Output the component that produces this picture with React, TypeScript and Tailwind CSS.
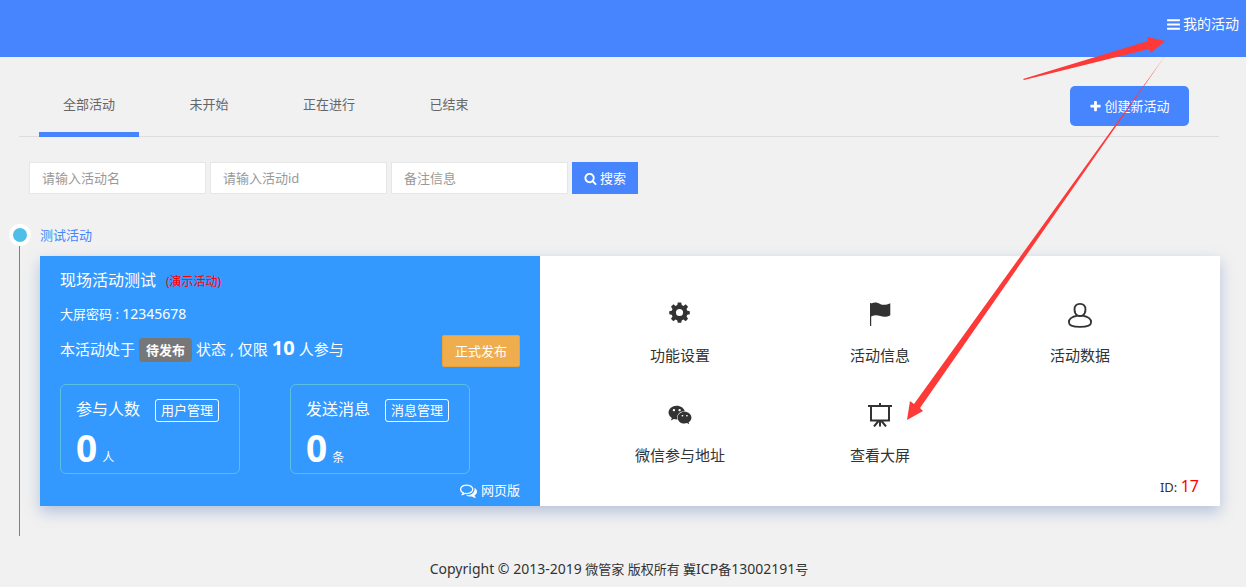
import type { FC, ReactNode } from "react";
import { FaWeixin } from "react-icons/fa";

type GlyphProps = { d: string; className?: string };

const Glyph: FC<GlyphProps> = ({ d, className }) => (
  <svg viewBox="0 0 1792 1792" fill="currentColor" aria-hidden="true" className={className}>
    <path d={d} />
  </svg>
);

const bars =
  "M1664 1344v128q0 26-19 45t-45 19h-1408q-26 0-45-19t-19-45v-128q0-26 19-45t45-19h1408q26 0 45 19t19 45zm0-512v128q0 26-19 45t-45 19h-1408q-26 0-45-19t-19-45v-128q0-26 19-45t45-19h1408q26 0 45 19t19 45zm0-512v128q0 26-19 45t-45 19h-1408q-26 0-45-19t-19-45v-128q0-26 19-45t45-19h1408q26 0 45 19t19 45z";
const plus =
  "M1600 736v192q0 40-28 68t-68 28h-416v416q0 40-28 68t-68 28h-192q-40 0-68-28t-28-68v-416h-416q-40 0-68-28t-28-68v-192q0-40 28-68t68-28h416v-416q0-40 28-68t68-28h192q40 0 68 28t28 68v416h416q40 0 68 28t28 68z";
const search =
  "M1216 832q0-185-131.500-316.500t-316.500-131.500-316.500 131.500-131.500 316.500 131.500 316.500 316.500 131.500 316.500-131.500 131.500-316.500zm512 832q0 52-38 90t-90 38q-54 0-90-38l-343-342q-179 124-399 124-143 0-273.500-55.500t-225-150-150-225-55.500-273.500 55.500-273.500 150-225 225-150 273.500-55.500 273.500 55.500 225 150 150 225 55.500 273.500q0 220-124 399l343 343q37 37 37 90z";
const comments =
  "M704 384q-153 0-286 52t-211.500 141-78.500 191q0 82 53 158t149 132l97 56-35 84q34-20 62-39l44-31 53 10q78 14 153 14 153 0 286-52t211.500-141 78.500-191-78.500-191-211.500-141-286-52zm0-128q191 0 353.500 68.500t256.500 186.500 94 257-94 257-256.500 186.500-353.500 68.500q-86 0-176-16-124 88-278 128-36 9-86 16h-3q-11 0-20.500-8t-11.500-21q-1-3-1-6.500t.5-6.500 2-6l2.500-5 3.500-5.500 4-5 4.500-5 4-4.500q5-6 23-25t26-29.500 22.500-29 25-38.500 20.500-44q-124-72-195-177t-71-224q0-139 94-257t256.500-186.500 353.500-68.500zm822 1169q10 24 20.500 44t25 38.500 22.500 29 26 29.500 23 25q1 1 4 4.500t4.500 5 4 5 3.500 5.500l2.500 5 2 6 .5 6.500-1 6.500q-3 14-13 22t-22 7q-50-7-86-16-154-40-278-128-90 16-176 16-271 0-472-132 58 4 88 4 161 0 309-45t264-129q125-92 192-212t67-254q0-77-23-152 129 71 204 178t75 230q0 120-71 224.500t-195 176.500z";

const GearIcon = () => (
  <svg viewBox="0 2 25 25" fill="currentColor" aria-hidden="true" className="size-6 overflow-visible">
    <path
      fillRule="evenodd"
      d="M10.200 1.500h3.600l.5 2.700 1.800.8 2.300-1.600 2.500 2.500-1.600 2.300.8 1.800 2.600.5v3.300l-2.600.5-.8 1.800 1.600 2.300-2.500 2.500-2.300-1.600-1.800.8-.5 2.600h-3.600l-.5-2.600-1.800-.8-2.300 1.600-2.500-2.500 1.600-2.300-.8-1.800-2.600-.5v-3.300l2.600-.5.8-1.800-1.600-2.300 2.500-2.500 2.300 1.600 1.800-.8zM12 8.200a3.700 3.700 0 1 0 0 7.400a3.700 3.700 0 0 0 0-7.400z"
    />
  </svg>
);

const FlagIcon = () => (
  <svg viewBox="0 2 24 24" fill="currentColor" aria-hidden="true" className="size-6 overflow-visible">
    <path d="M2 2h1.200v23H2zM3.200 2.600C7 .8 9.500 1.800 12 2.900s5.500 1.600 10.300-.7v12c-3.500 2-7 1.900-10 .8s-6-1.200-9.100.4z" />
  </svg>
);

const UserIcon = () => (
  <svg
    viewBox="0 0 24 24"
    fill="none"
    stroke="currentColor"
    strokeWidth="1.800"
    aria-hidden="true"
    className="size-6 overflow-visible"
  >
    <path d="M12 .9c-3.700 0-5.500 2.500-5.500 5.700 0 2.700 1.300 5 3.100 6.100C4.500 13.600.9 16 .9 19.200c0 3.600 4.400 4.700 11.100 4.700s11.100-1.100 11.100-4.700c0-3.200-3.600-5.600-8.700-6.500 1.800-1.100 3.100-3.400 3.100-6.100C17.500 3.400 15.700.9 12 .9z" />
    <path d="M9.300 12.500q2.700 1 5.400 0" />
  </svg>
);

const ScreenIcon = () => (
  <svg
    viewBox="0 0 24 24"
    fill="none"
    stroke="currentColor"
    strokeWidth="2"
    aria-hidden="true"
    className="size-6"
  >
    <path d="M0 3h24M12 0v3M3 3v14.500h18V3M12 17.500v6M10.500 18l-4.500 5.500M13.500 18l4.500 5.500" />
  </svg>
);

const tabs = ["全部活动", "未开始", "正在进行", "已结束"];
const fields = ["请输入活动名", "请输入活动id", "备注信息"];

const actions: { label: string; icon: ReactNode }[] = [
  { label: "功能设置", icon: <GearIcon /> },
  { label: "活动信息", icon: <FlagIcon /> },
  { label: "活动数据", icon: <UserIcon /> },
  { label: "微信参与地址", icon: <FaWeixin className="size-6" /> },
  { label: "查看大屏", icon: <ScreenIcon /> },
];

const stats = [
  { title: "参与人数", manage: "用户管理", count: 0, unit: "人" },
  { title: "发送消息", manage: "消息管理", count: 0, unit: "条" },
];

// Red pointers laid over the page, from the menu down to the big screen entry
const Pointers = () => (
  <svg
    viewBox="0 0 246 440"
    fill="#fd3a38"
    aria-hidden="true"
    className="pointer-events-none absolute top-0 right-0 h-[440px] w-[246px] overflow-visible"
  >
    <path d="M23 79l125-38-1-4 18 4-14 12-2-4-125 31z" />
    <path d="M165 56L-86 404l-4-3-3 19 16-9-3-3z" />
  </svg>
);

const App: FC = () => {
  return (
    <div className="relative min-h-screen bg-[#f1f1f1] font-['Noto_Sans','Noto_Sans_CJK_SC',sans-serif] text-[13px] leading-5 text-[#333]">
      <header className="flex h-[57px] justify-end bg-[#4785ff] px-[7px] pt-[14px]">
        <a href="#" className="flex h-5 items-center gap-[2px] text-sm leading-5 text-white">
          <Glyph d={bars} className="size-[15px]" />
          我的活动
        </a>
      </header>

      <main className="pr-[26px] pl-[19px]">
        {/* Tabs */}
        <div className="mr-px flex items-end justify-between border-b border-[#ddd] pt-[29px] pr-[30px] pl-5">
          <nav className="-mb-px flex gap-5">
            {tabs.map((tab, i) => (
              <a
                key={tab}
                href="#"
                className={
                  i === 0
                    ? "flex h-[51px] w-[100px] justify-center border-b-5 border-[#4785ff] pt-2 text-[#666]"
                    : "flex h-[51px] w-[100px] justify-center pt-2 text-[#666]"
                }
              >
                {tab}
              </a>
            ))}
          </nav>
          <button
            type="button"
            className="mb-2.5 flex h-10 w-[119px] items-center justify-center gap-[2px] rounded-[5px] bg-[#4785ff] text-white"
          >
            <Glyph d={plus} className="size-[13px]" />
            创建新活动
          </button>
        </div>

        {/* Search form */}
        <form className="mt-[25px] flex gap-1 pl-2.5">
          {fields.map((field) => (
            <input
              key={field}
              type="text"
              aria-label={field}
              placeholder={field}
              className="h-8 w-[177px] border border-[#e6e6e6] bg-white px-3 placeholder:text-[#999]"
            />
          ))}
          <button
            type="button"
            className="flex h-8 w-[66px] items-center justify-center gap-[3px] bg-[#4785ff] text-white"
          >
            <Glyph d={search} className="size-[13px]" />
            搜索
          </button>
        </form>

        {/* Timeline */}
        <section className="mt-[30px] flex">
          <div className="-ml-2.5 flex w-[22px] flex-col">
            <span className="size-[22px] shrink-0 rounded-full border-4 border-white bg-[#50bfe8]" />
            <span className="ml-2.5 w-px flex-1 bg-[#4785ff]" />
          </div>
          <div className="ml-[9px] flex-1 pb-[30px]">
            <h2 className="h-8 leading-[22px] text-[#4785ff]">测试活动</h2>

            <article className="flex min-h-[250px] bg-white shadow-[0_6px_14px_rgba(71,110,180,0.35)]">
              <div className="w-[500px] bg-[#3399ff] px-5 pt-3 text-white">
                <h3 className="flex h-6 items-baseline gap-2.5 text-base leading-6">
                  现场活动测试
                  <span className="text-xs leading-6 text-[#f00]">(演示活动)</span>
                </h3>
                <p className="mt-2.5 h-6 leading-6">
                  大屏密码 : <span className="text-sm leading-6">12345678</span>
                </p>
                <div className="mt-2 flex h-[33px] items-start justify-between">
                  <p className="flex items-baseline gap-1 pt-0.5 text-[15px] leading-6">
                    <span>本活动处于</span>
                    <span className="rounded bg-[#777] px-[7px] text-[13px] leading-6 font-bold">
                      待发布
                    </span>
                    <span>状态 , 仅限</span>
                    <strong className="text-xl leading-6">10</strong>
                    <span>人参与</span>
                  </p>
                  <button
                    type="button"
                    className="h-8 w-[78px] self-end rounded-[2px] border border-[#eea236] bg-[#f0ad4e]"
                  >
                    正式发布
                  </button>
                </div>
                <div className="mt-[17px] flex gap-[50px]">
                  {stats.map((stat) => (
                    <div
                      key={stat.title}
                      className="h-[90px] w-[180px] rounded-md border border-[#5bc0de] px-[15px] pt-3"
                    >
                      <div className="flex h-6 items-baseline gap-[15px] text-base leading-6">
                        {stat.title}
                        <button
                          type="button"
                          className="h-[23px] w-16 rounded-[3px] border border-white text-[13px] leading-5"
                        >
                          {stat.manage}
                        </button>
                      </div>
                      <p className="mt-[7px] flex items-baseline gap-[5px] text-xs leading-10">
                        <strong className="text-[37px] leading-10">{stat.count}</strong>
                        {stat.unit}
                      </p>
                    </div>
                  ))}
                </div>
                <div className="mt-1.5 flex justify-end">
                  <a href="#" className="flex items-center gap-1">
                    <Glyph d={comments} className="size-[17px]" />
                    网页版
                  </a>
                </div>
              </div>

              <div className="flex flex-1 flex-col justify-between pt-[47px] pb-[7px]">
                <div className="grid grid-cols-3 px-10">
                  {actions.map((action) => (
                    <a
                      key={action.label}
                      href="#"
                      className="flex h-[100px] flex-col items-center gap-4 text-[15px] leading-6"
                    >
                      {action.icon}
                      {action.label}
                    </a>
                  ))}
                </div>
                <p className="-mt-8 pr-[21px] text-right leading-6">
                  ID: <span className="text-base leading-6 text-[#f00]">17</span>
                </p>
              </div>
            </article>
          </div>
        </section>
      </main>

      <footer className="pt-[23px] pr-2 pb-2 text-center">
        <span className="text-sm leading-5">Copyright © 2013-2019 </span>
        微管家 版权所有 冀<span className="text-sm leading-5">ICP</span>备
        <span className="text-sm leading-5">13002191</span>号
      </footer>

      <Pointers />
    </div>
  );
};

export default App;
